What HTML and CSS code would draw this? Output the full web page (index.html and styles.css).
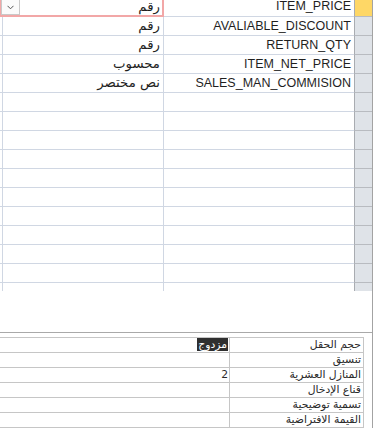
FILE: index.html
```html
<!DOCTYPE html>
<html lang="ar">
<head>
<meta charset="utf-8">
<link rel="stylesheet" href="styles.css">
</head>
<body>
<div class="app">
  <div class="design">
    <div class="row first">
      <div class="c desc"></div>
      <div class="c type"><span class="ar">رقم</span></div>
      <div class="c name">ITEM_PRICE</div>
      <div class="c sel current"></div>
      <div class="focus"></div>
      <div class="dd"><svg width="7" height="5" viewBox="0 0 7 5"><path d="M0.5 0.8 L3.5 3.8 L6.5 0.8" fill="none" stroke="#555" stroke-width="1"/></svg></div>
    </div>
    <div class="row"><div class="c desc"></div><div class="c type"><span class="ar">رقم</span></div><div class="c name">AVALIABLE_DISCOUNT</div><div class="c sel"></div></div>
    <div class="row"><div class="c desc"></div><div class="c type"><span class="ar">رقم</span></div><div class="c name">RETURN_QTY</div><div class="c sel"></div></div>
    <div class="row"><div class="c desc"></div><div class="c type"><span class="ar">محسوب</span></div><div class="c name">ITEM_NET_PRICE</div><div class="c sel"></div></div>
    <div class="row"><div class="c desc"></div><div class="c type"><span class="ar">نص مختصر</span></div><div class="c name">SALES_MAN_COMMISION</div><div class="c sel"></div></div>
    <div class="row"><div class="c desc"></div><div class="c type"></div><div class="c name"></div><div class="c sel"></div></div>
    <div class="row"><div class="c desc"></div><div class="c type"></div><div class="c name"></div><div class="c sel"></div></div>
    <div class="row"><div class="c desc"></div><div class="c type"></div><div class="c name"></div><div class="c sel"></div></div>
    <div class="row"><div class="c desc"></div><div class="c type"></div><div class="c name"></div><div class="c sel"></div></div>
    <div class="row"><div class="c desc"></div><div class="c type"></div><div class="c name"></div><div class="c sel"></div></div>
    <div class="row"><div class="c desc"></div><div class="c type"></div><div class="c name"></div><div class="c sel"></div></div>
    <div class="row"><div class="c desc"></div><div class="c type"></div><div class="c name"></div><div class="c sel"></div></div>
    <div class="row"><div class="c desc"></div><div class="c type"></div><div class="c name"></div><div class="c sel"></div></div>
    <div class="row"><div class="c desc"></div><div class="c type"></div><div class="c name"></div><div class="c sel"></div></div>
    <div class="row"><div class="c desc"></div><div class="c type"></div><div class="c name"></div><div class="c sel"></div></div>
    <div class="row last"><div class="c desc"></div><div class="c type"></div><div class="c name"></div><div class="c sel"></div></div>
  </div>

  <div class="panel">
    <div class="props">
      <div class="prow"><div class="pv"><span class="hl">مزدوج</span></div><div class="pl">حجم الحقل</div></div>
      <div class="prow"><div class="pv"></div><div class="pl">تنسيق</div></div>
      <div class="prow"><div class="pv">2</div><div class="pl">المنازل العشرية</div></div>
      <div class="prow"><div class="pv"></div><div class="pl">قناع الإدخال</div></div>
      <div class="prow"><div class="pv"></div><div class="pl">تسمية توضيحية</div></div>
      <div class="prow"><div class="pv"></div><div class="pl">القيمة الافتراضية</div></div>
    </div>
  </div>
</div>
</body>
</html>
```

FILE: styles.css
```css
html, body {
  margin: 0;
  padding: 0;
  background: #ffffff;
}

body {
  width: 375px;
  height: 428px;
  overflow: hidden;
  font-family: "Liberation Sans", "DejaVu Sans", sans-serif;
  color: #1f1f1f;
}

.app {
  width: 372px;
  height: 428px;
  border-right: 1px solid #a3a3a3;
  overflow: hidden;
}

.design {
  display: flex;
  flex-direction: column;
}

.row {
  position: relative;
  display: grid;
  grid-template-columns: 3px 161px 190px 18px;
  height: 19px;
}

.c {
  box-sizing: border-box;
  height: 100%;
  border-bottom: 1px solid #d0d7e3;
  font-size: 12.5px;
  line-height: 18px;
  text-align: right;
  white-space: nowrap;
  overflow: hidden;
}

.desc {
  border-right: 1px solid #d0d7e3;
}

.type {
  border-right: 1px solid #d0d7e3;
  padding-right: 3px;
}

.name {
  padding-right: 3px;
}

.sel {
  background: #dfe3e8;
  border-left: 1px solid #a9acb1;
  border-bottom-color: #b8bbc0;
}

.sel.current {
  background: #fed766;
}

.ar {
  font-family: "DejaVu Sans", sans-serif;
  font-size: 13.3px;
}

.row.first {
  height: 17px;
}

.row.first .c {
  line-height: 13px;
}

.row.last {
  height: 8px;
}

.row.last .c {
  border-bottom: none;
}

.focus {
  position: absolute;
  left: 0;
  top: -3px;
  width: 164px;
  height: 20px;
  box-sizing: border-box;
  border: 2px solid #f2a7a7;
  pointer-events: none;
}

.dd {
  position: absolute;
  left: 1px;
  top: -1px;
  width: 19px;
  height: 16px;
  box-sizing: border-box;
  border: 1px solid #c9c9c9;
  background: #fbfbfb;
  display: flex;
  align-items: center;
  justify-content: center;
}

.panel {
  margin-top: 41px;
  border-top: 1px solid #a9a9a9;
  padding-top: 4px;
}

.props {
  width: 364px;
  border-top: 1px solid #c6c6c6;
}

.prow {
  display: grid;
  grid-template-columns: 230px 134px;
  height: 15px;
}

.pv, .pl {
  box-sizing: border-box;
  height: 15px;
  border-bottom: 1px solid #c6c6c6;
  font-family: "DejaVu Sans", sans-serif;
  font-size: 10.8px;
  line-height: 14px;
  text-align: right;
  white-space: nowrap;
  overflow: hidden;
  color: #2a2a2a;
}

.pv {
  border-right: 1px solid #c6c6c6;
  padding-right: 1px;
}

.pl {
  border-right: 1px solid #c6c6c6;
  padding-right: 2px;
}

.hl {
  display: inline-block;
  background: #2f2f2f;
  color: #ffffff;
  padding: 0 1px;
  line-height: 13px;
}
```
